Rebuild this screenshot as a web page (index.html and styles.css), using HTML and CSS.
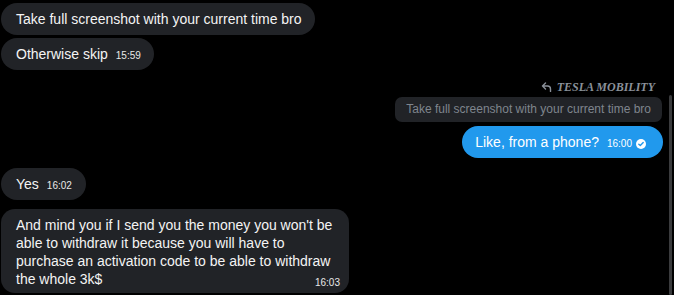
FILE: index.html
```html
<!DOCTYPE html>
<html lang="en">
<head>
  <meta charset="UTF-8">
  <meta name="viewport" content="width=device-width, initial-scale=1.0">
  <title>Chat</title>
  <link rel="stylesheet" href="styles.css">
</head>
<body>
  <div class="chat">
    <div class="bubble">Take full screenshot with your current time bro</div>
    <div class="bubble next">Otherwise skip<span class="time">15:59</span></div>

    <div class="out">
      <div class="reply-head">
        <svg class="reply-icon" width="11" height="10" viewBox="0 0 11 10">
          <path d="M4.5 1 L1.5 4 L4.5 7 M1.5 4 H6.5 a3 3 0 0 1 3 3 V9.5" fill="none" stroke="#8a9099" stroke-width="1.4" stroke-linecap="round" stroke-linejoin="round"/>
        </svg>
        <span class="reply-name">TESLA MOBILITY</span>
      </div>
      <div class="quote">Take full screenshot with your current time bro</div>
      <div class="bubble blue">Like, from a phone?<span class="time">16:00</span>
        <svg class="check" width="10" height="10" viewBox="0 0 10 10">
          <circle cx="5" cy="5" r="5" fill="#fff"/>
          <path d="M2.8 5.2 L4.3 6.6 L7.2 3.6" fill="none" stroke="#2199ed" stroke-width="1.4" stroke-linecap="round" stroke-linejoin="round"/>
        </svg>
      </div>
    </div>

    <div class="bubble yes">Yes<span class="time">16:02</span></div>
    <div class="bubble long">And mind you if I send you the money you won't be able to withdraw it because you will have to purchase an activation code to be able to withdraw the whole 3k$<span class="time end">16:03</span></div>
  </div>
  <div class="scrollbar"></div>
</body>
</html>
```

FILE: styles.css
```css
body {
  margin: 0;
  background: #000;
  font-family: "Liberation Sans", Arial, sans-serif;
  width: 674px;
  height: 295px;
  overflow: hidden;
  position: relative;
}
.chat {
  display: flex;
  flex-direction: column;
  align-items: flex-start;
  padding: 3px 11px 0 1px;
}
.bubble {
  box-sizing: border-box;
  min-height: 32px;
  background: #212327;
  color: #f4f4f4;
  font-size: 14px;
  line-height: 18px;
  padding: 7px 13px 7px 15px;
  border-radius: 16px;
}
.bubble.next {
  margin-top: 3px;
}
.time {
  font-size: 10px;
  line-height: 10px;
  margin-left: 8px;
  color: #e8e8e8;
}
.out {
  align-self: flex-end;
  display: flex;
  flex-direction: column;
  align-items: flex-end;
  margin-top: 10px;
}
.reply-head {
  display: flex;
  align-items: center;
  gap: 5px;
  height: 14px;
  padding-right: 8px;
}
.reply-name {
  font-family: "Liberation Serif", "Times New Roman", serif;
  font-style: italic;
  font-weight: bold;
  font-size: 12px;
  color: #8a9099;
}
.quote {
  box-sizing: border-box;
  height: 25px;
  background: #212327;
  color: #7f858d;
  font-size: 12px;
  line-height: 15px;
  padding: 5px 11px;
  border-radius: 7px;
  margin-top: 3px;
  margin-right: 1px;
}
.bubble.blue {
  background: #2199ed;
  color: #fff;
  margin-top: 4px;
  padding: 7px 17px 6px 13px;
  display: flex;
  align-items: baseline;
}
.bubble.blue .time {
  color: #fff;
}
.check {
  margin-left: 4px;
  align-self: center;
  position: relative;
  top: 1px;
}
.bubble.yes {
  margin-top: 10px;
  padding-right: 14px;
}
.bubble.long {
  margin-top: 9px;
  max-width: 348px;
  display: flow-root;
  padding: 7px 15px 5px 15px;
  border-radius: 14px;
}
.time.end {
  float: right;
  margin: 7px -6px 0 10px;
  line-height: 11px;
}
.scrollbar {
  position: absolute;
  right: 2px;
  top: 95px;
  bottom: 0;
  width: 3px;
  border-radius: 2px;
  background: #3a3b3d;
}
```
